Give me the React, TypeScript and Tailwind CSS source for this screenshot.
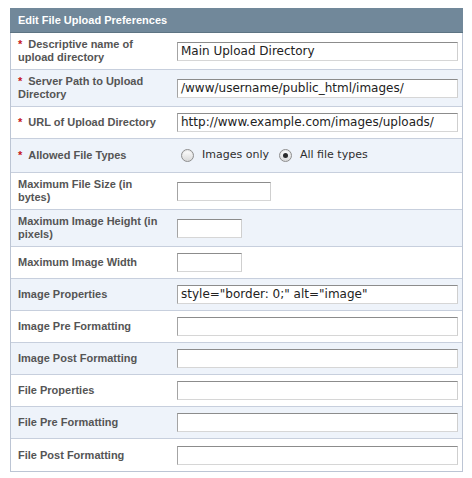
import { ReactNode } from 'react';

type Field = {
  label: string;
  required?: boolean;
  value?: string;
  width?: string;
  radio?: boolean;
};

const fields: Field[] = [
  { label: 'Descriptive name of upload directory', required: true, value: 'Main Upload Directory' },
  { label: 'Server Path to Upload Directory', required: true, value: '/www/username/public_html/images/' },
  { label: 'URL of Upload Directory', required: true, value: 'http://www.example.com/images/uploads/' },
  { label: 'Allowed File Types', required: true, radio: true },
  { label: 'Maximum File Size (in bytes)', width: 'w-[94px]' },
  { label: 'Maximum Image Height (in pixels)', width: 'w-[65px]' },
  { label: 'Maximum Image Width', width: 'w-[65px]' },
  { label: 'Image Properties', value: 'style="border: 0;" alt="image"' },
  { label: 'Image Pre Formatting' },
  { label: 'Image Post Formatting' },
  { label: 'File Properties' },
  { label: 'File Pre Formatting' },
  { label: 'File Post Formatting' },
];

function TextBox({ value, width }: { value?: string; width?: string }) {
  return (
    <div
      className={`h-[19px] ${width ?? 'w-[281px]'} border border-t-[#8c8c8c] border-l-[#a4a4a4] border-r-[#cfcfcf] border-b-[#d6d6d6] bg-white pl-[3px] text-[12px] leading-[17px] text-[#222] whitespace-nowrap overflow-hidden`}
      style={{ fontFamily: '"DejaVu Sans", sans-serif' }}
    >
      {value}
    </div>
  );
}

function Radio({ checked, children }: { checked?: boolean; children: ReactNode }) {
  return (
    <label className="flex items-center gap-[8px]">
      <span className="flex size-[13px] items-center justify-center rounded-full border border-[#8e8e8e] bg-gradient-to-b from-white to-[#d9d9d9] shadow-[inset_0_1px_1px_rgba(0,0,0,0.1)]">
        {checked && <span className="size-[5px] rounded-full bg-[#2a2a2a]" />}
      </span>
      <span className="text-[11px] text-[#2e2e2e]" style={{ fontFamily: '"DejaVu Sans", sans-serif' }}>
        {children}
      </span>
    </label>
  );
}

export default function App() {
  return (
    <div className="min-h-screen bg-white pt-[8px] pl-[10px]" style={{ fontFamily: '"Liberation Sans", Arial, sans-serif' }}>
      <div className="w-[453px] border-x border-b border-[#bcc5d4]">
        <div className="-mx-px flex h-[25px] items-center border-b border-[#5d7483] bg-[#71889a] pl-[8px] text-[11px] font-bold text-white">
          Edit File Upload Preferences
        </div>
        {fields.map((field, i) => (
          <div
            key={i}
            className={`grid grid-cols-[160px_1fr] ${i < fields.length - 1 ? 'border-b border-[#c7cfdd]' : ''} ${i % 2 === 1 ? 'bg-[#eef3fa]' : 'bg-white'} ${field.radio ? 'min-h-[34px]' : 'min-h-[32px]'}`}
          >
            <div className="flex items-center py-[5px] pr-[8px] pl-[7px] text-[11px] leading-[13px] font-bold text-[#555]">
              <span className={field.required ? "before:mr-[6px] before:text-[#c4161c] before:content-['*']" : ''}>
                {field.label}
              </span>
            </div>
            <div className="flex items-center py-[5px] pl-[6px]">
              {field.radio ? (
                <div className="flex items-center gap-[10px] pl-[4px]">
                  <Radio>Images only</Radio>
                  <Radio checked>All file types</Radio>
                </div>
              ) : (
                <TextBox value={field.value} width={field.width} />
              )}
            </div>
          </div>
        ))}
      </div>
    </div>
  );
}
